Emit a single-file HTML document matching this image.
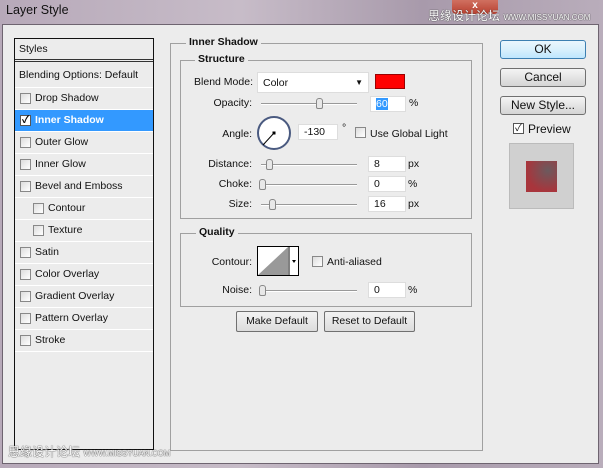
<!DOCTYPE html>
<html><head><meta charset="utf-8"><style>
*{margin:0;padding:0;box-sizing:border-box}
body{width:603px;height:468px;position:relative;overflow:hidden;background:linear-gradient(90deg,#b7a9b9,#c7bcc8 40%,#a89aab 70%,#b9adbb);font-family:"Liberation Sans","Noto Sans CJK SC",sans-serif;font-size:10.5px;color:#111}
.a{position:absolute}
.title{left:6px;top:3px;font-size:12.5px;color:#111}
.win{left:2px;top:24px;width:597px;height:440px;background:#ececec;border:1px solid #6e6470}
.list{left:14px;top:38px;width:140px;height:412px;border:1px solid #111;background:#ececec}
.row{position:absolute;left:0;width:138px;height:22px;border-bottom:1px solid #fff;line-height:21px;padding-left:20px}
.cb{position:absolute;width:11px;height:11px;border:1px solid #888;background:linear-gradient(135deg,#ddd,#fff);top:5px;left:5px}
.sel{background:#3399ff;color:#fff;font-weight:bold}
.gb{position:absolute;border:1px solid #a0a0a0}
.lg{position:absolute;background:#ececec;font-weight:bold;padding:0 3px;font-size:10.5px}
.lbl{position:absolute;text-align:right;width:90px}
.in{position:absolute;background:#fff;border:1px solid #ddd;height:16px;line-height:15px;padding-left:5px}
.sl{position:absolute;height:2px;border-top:1px solid #999;border-bottom:1px solid #fff;width:96px}
.th{position:absolute;width:7px;height:11px;border:1px solid #888;border-radius:3px 3px 2px 2px;background:#e8e8e8;top:-6px}
.btn{position:absolute;border:1px solid #707070;border-radius:3px;background:linear-gradient(#f4f4f4,#e4e4e4 50%,#d4d4d4);text-align:center;font-size:12px}
.sb{position:absolute;border:1px solid #707070;border-radius:2px;background:linear-gradient(#f2f2f2,#dcdcdc);text-align:center;line-height:19px}
.wm{color:#fff;font-size:12px;text-shadow:0 0 1px #444,0 0 1px #444}
</style></head><body>
<div class="a title">Layer Style</div>
<div class="a" style="left:452px;top:0;width:46px;height:14px;background:linear-gradient(#d07060,#b84030);border-radius:0 0 4px 4px;color:#fff;text-align:center;font-weight:bold;font-size:10px">x</div>
<div class="a wm" style="left:428px;top:7px">思缘设计论坛 <span style="font-size:8px">WWW.MISSYUAN.COM</span></div>
<div class="a win"></div>
<div class="a list">
<div class="row" style="top:0;height:23px;padding-left:4px;border-bottom:3px double #333">Styles</div>
<div class="row" style="top:26px;height:23px;padding-left:4px">Blending Options: Default</div>
<div class="row" style="top:49px"><span class="cb"></span>Drop Shadow</div>
<div class="row sel" style="top:71px"><span class="cb" style="background:#fff;border-color:#555;color:#000;font-size:10px;line-height:9px;text-align:center">✓</span>Inner Shadow</div>
<div class="row" style="top:93px"><span class="cb"></span>Outer Glow</div>
<div class="row" style="top:115px"><span class="cb"></span>Inner Glow</div>
<div class="row" style="top:137px"><span class="cb"></span>Bevel and Emboss</div>
<div class="row" style="top:159px;padding-left:33px"><span class="cb" style="left:18px"></span>Contour</div>
<div class="row" style="top:181px;padding-left:33px"><span class="cb" style="left:18px"></span>Texture</div>
<div class="row" style="top:203px"><span class="cb"></span>Satin</div>
<div class="row" style="top:225px"><span class="cb"></span>Color Overlay</div>
<div class="row" style="top:247px"><span class="cb"></span>Gradient Overlay</div>
<div class="row" style="top:269px"><span class="cb"></span>Pattern Overlay</div>
<div class="row" style="top:291px"><span class="cb"></span>Stroke</div>
</div>
<div class="a wm" style="left:8px;top:443px">思缘设计论坛 <span style="font-size:8px">WWW.MISSYUAN.COM</span></div>

<div class="gb" style="left:170px;top:43px;width:313px;height:408px"></div>
<div class="lg" style="left:186px;top:36px">Inner Shadow</div>
<div class="gb" style="left:180px;top:60px;width:292px;height:159px"></div>
<div class="lg" style="left:195px;top:53px">Structure</div>
<div class="lbl" style="left:163px;top:76px">Blend Mode:</div>
<div class="in" style="left:257px;top:72px;width:112px;height:21px;line-height:20px">Color<span style="position:absolute;right:5px;top:0;font-size:8px">▼</span></div>
<div class="a" style="left:375px;top:74px;width:30px;height:15px;background:#f00;border:1px solid #900"></div>
<div class="lbl" style="left:162px;top:97px">Opacity:</div>
<div class="sl" style="left:261px;top:103px"><span class="th" style="left:55px"></span></div>
<div class="in" style="left:370px;top:96px;width:36px"><span style="background:#39f;color:#fff">60</span></div>
<div class="a" style="left:409px;top:97px">%</div>
<div class="lbl" style="left:162px;top:128px">Angle:</div>
<div class="a" style="left:257px;top:116px;width:34px;height:34px;border-radius:50%;border:2px solid #4a5a80;background:#fff"></div>
<svg class="a" style="left:257px;top:116px" width="34" height="34"><line x1="17" y1="17" x2="6" y2="29" stroke="#000"/><rect x="15.5" y="15.5" width="3" height="3"/></svg>
<div class="in" style="left:298px;top:124px;width:40px">-130</div>
<div class="a" style="left:342px;top:122px">°</div>
<div class="cb a" style="left:355px;top:127px"></div>
<div class="a" style="left:370px;top:128px">Use Global Light</div>
<div class="lbl" style="left:162px;top:158px">Distance:</div>
<div class="sl" style="left:261px;top:164px"><span class="th" style="left:5px"></span></div>
<div class="in" style="left:368px;top:156px;width:38px">8</div><div class="a" style="left:408px;top:158px">px</div>
<div class="lbl" style="left:162px;top:178px">Choke:</div>
<div class="sl" style="left:261px;top:184px"><span class="th" style="left:-2px"></span></div>
<div class="in" style="left:368px;top:176px;width:38px">0</div><div class="a" style="left:408px;top:178px">%</div>
<div class="lbl" style="left:162px;top:198px">Size:</div>
<div class="sl" style="left:261px;top:204px"><span class="th" style="left:8px"></span></div>
<div class="in" style="left:368px;top:196px;width:38px">16</div><div class="a" style="left:408px;top:198px">px</div>

<div class="gb" style="left:180px;top:233px;width:292px;height:74px"></div>
<div class="lg" style="left:196px;top:226px">Quality</div>
<div class="lbl" style="left:162px;top:256px">Contour:</div>
<div class="a" style="left:257px;top:246px;width:42px;height:30px;border:1px solid #000;background:#fff"></div>
<svg class="a" style="left:258px;top:247px" width="40" height="28"><polygon points="0,28 30,0 30,28" fill="#999"/><line x1="31" y1="0" x2="31" y2="28" stroke="#000"/><polygon points="34,13 38,13 36,16" fill="#000"/></svg>
<div class="cb a" style="left:312px;top:256px"></div>
<div class="a" style="left:327px;top:256px">Anti-aliased</div>
<div class="lbl" style="left:162px;top:284px">Noise:</div>
<div class="sl" style="left:261px;top:290px"><span class="th" style="left:-2px"></span></div>
<div class="in" style="left:368px;top:282px;width:38px">0</div><div class="a" style="left:408px;top:284px">%</div>
<div class="sb" style="left:236px;top:311px;width:82px;height:21px">Make Default</div>
<div class="sb" style="left:324px;top:311px;width:91px;height:21px">Reset to Default</div>

<div class="btn" style="left:500px;top:40px;width:86px;height:19px;border-color:#3c7fb1;line-height:17px;background:linear-gradient(#eaf6fd,#d9f0fc 50%,#bee6fd)">OK</div>
<div class="btn" style="left:500px;top:68px;width:86px;height:19px;line-height:17px">Cancel</div>
<div class="btn" style="left:500px;top:96px;width:86px;height:19px;line-height:17px">New Style...</div>
<div class="cb a" style="left:513px;top:123px;background:#fff;border-color:#555;font-size:10px;line-height:9px;text-align:center">✓</div>
<div class="a" style="left:528px;top:122px;font-size:12px">Preview</div>
<div class="a" style="left:509px;top:143px;width:65px;height:66px;background:#d0d0d0;border:1px solid #bbb"></div>
<div class="a" style="left:526px;top:161px;width:31px;height:31px;background:radial-gradient(circle at 70% 30%,#6b5a5e,#a8353c 70%)"></div>
</body></html>
